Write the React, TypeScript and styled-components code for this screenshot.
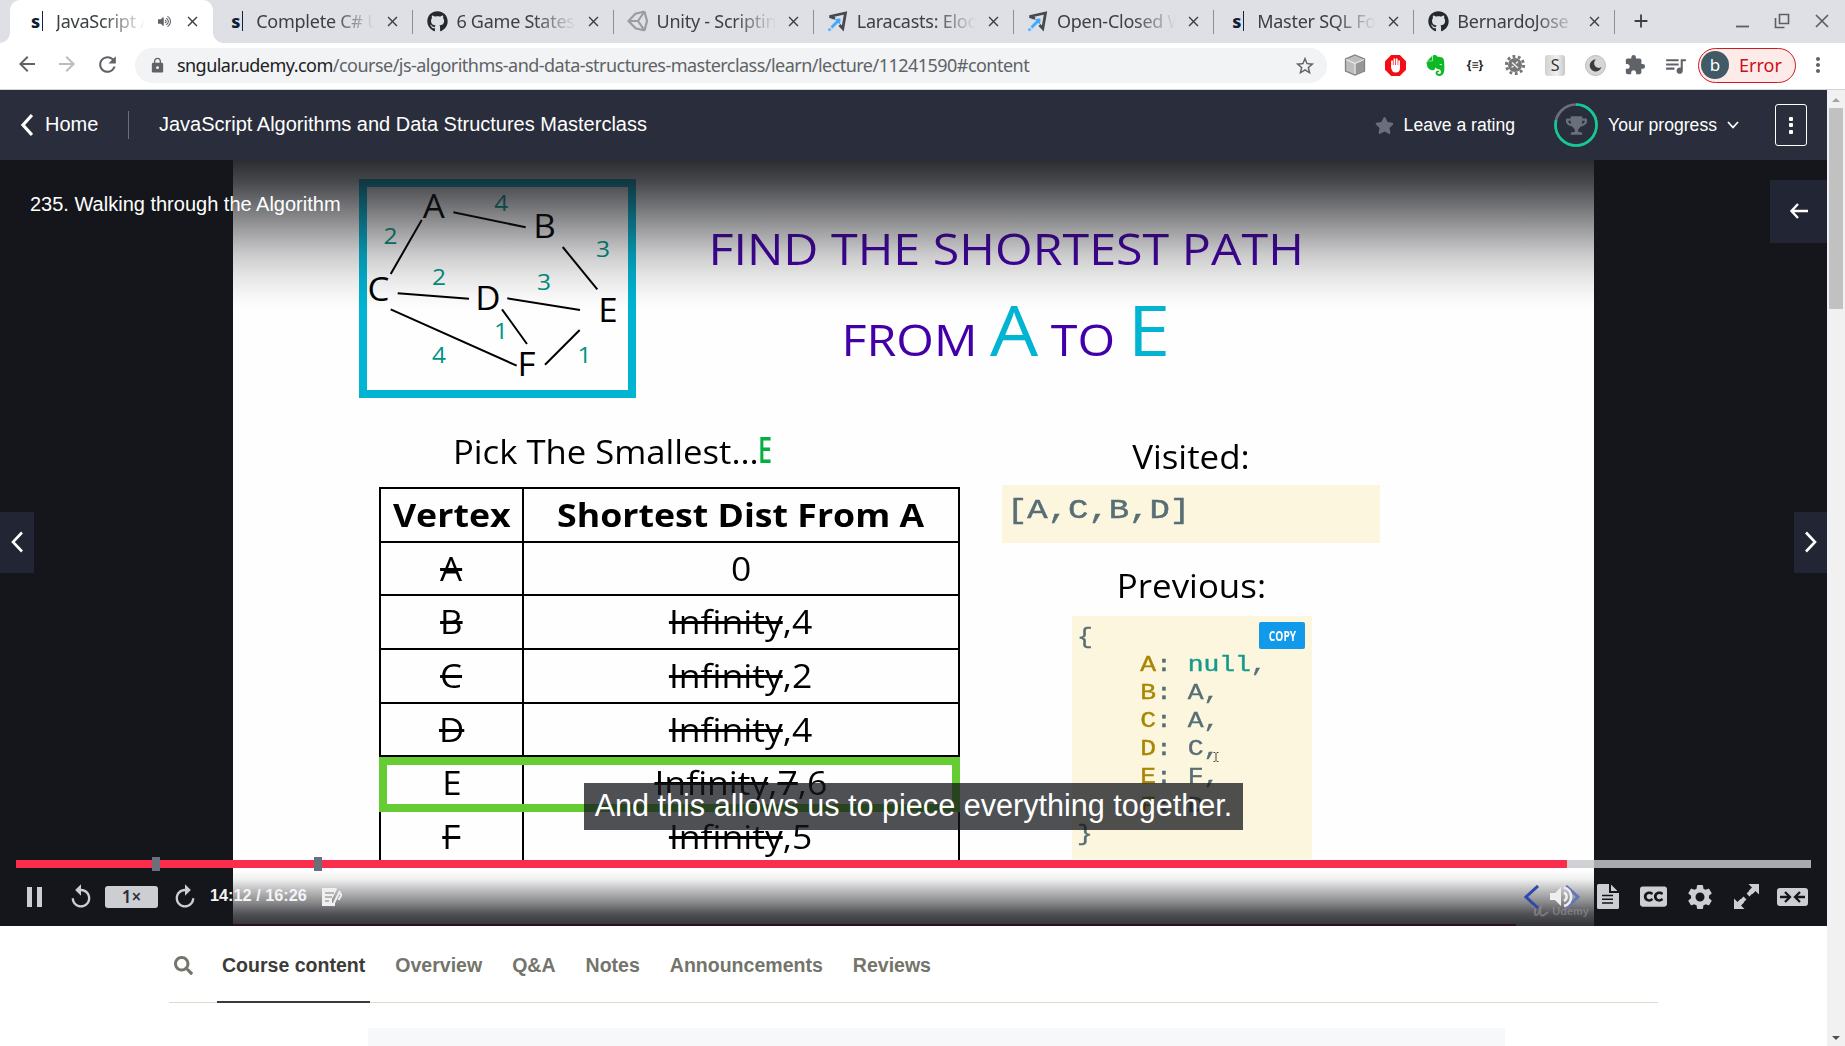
import React from "react";
import styled, { createGlobalStyle, css } from "styled-components";
import { FaGithub, FaVolumeUp, FaStar, FaTrophy, FaClosedCaptioning, FaSearch } from "react-icons/fa";
import {
  MdArrowBack, MdArrowForward, MdRefresh, MdLock, MdStarBorder, MdExtension, MdQueueMusic,
  MdMoreVert, MdReplay, MdSettings, MdAdd, MdClose,
} from "react-icons/md";
import { SiEvernote } from "react-icons/si";

const ui = `"Noto Sans", "Open Sans", sans-serif`;
const slideFont = `"Open Sans", "Noto Sans", sans-serif`;
const sans = `"Liberation Sans", Arial, sans-serif`;
const mono = `"Liberation Mono", "Courier New", monospace`;

const GlobalStyle = createGlobalStyle`
  * { box-sizing: border-box; }
  body { margin: 0; background: #fff; overflow: hidden; }
  svg { display: block; flex: none; }
`;

const Browser = styled.div`
  display: flex;
  flex-direction: column;
  width: 1845px;
  height: 1046px;
  overflow: hidden;
  font-family: ${sans};
`;

/* ---------- tab strip ---------- */
const TabStrip = styled.div`
  display: flex;
  height: 43px;
  flex: none;
  padding-left: 13px;
  background: #dee0e6;
  color: #3c4043;
`;

const TabBox = styled.div<{ $active?: boolean; $divider?: boolean }>`
  position: relative;
  display: flex;
  align-items: center;
  width: 200.2px;
  height: 43px;
  padding: 0 12px 1px 12px;
  font: 18px/42px ${ui};
  letter-spacing: -0.25px;
  ${(p) => p.$active && css`
    background: #fff;
    border-radius: 10px 10px 0 0;
    box-shadow: -3px 0 0 #fff;
    &::before, &::after {
      content: "";
      position: absolute;
      bottom: 0;
      width: 10px;
      height: 10px;
    }
    &::before { left: -13px; background: radial-gradient(circle at 0 0, transparent 9.5px, #fff 10px); }
    &::after { right: -10px; background: radial-gradient(circle at 100% 0, transparent 9.5px, #fff 10px); }
  `}
  ${(p) => p.$divider && css`
    background: linear-gradient(#8b8e94, #8b8e94) right 10px / 1px 24px no-repeat;
  `}
`;

const Favicon = styled.div`
  display: grid;
  place-items: center;
  width: 24px;
  height: 24px;
  flex: none;
`;

const SMark = styled.span`
  display: block;
  padding-right: 2px;
  border-right: 1.5px solid #14243c;
  color: #0e1d36;
  font: 800 18px/20px ${ui};
`;

const TabTitle = styled.div`
  flex: 1;
  min-width: 0;
  margin-left: 7px;
  overflow: hidden;
  white-space: nowrap;
  height: 42px;
  mask-image: linear-gradient(90deg, #000 calc(100% - 44px), transparent calc(100% - 2px));
`;

const TabSound = styled(FaVolumeUp)`
  width: 13px;
  height: 13px;
  margin: 0 6px 0 11px;
  color: #5f6368;
`;

const TabClose = styled(MdClose)`
  margin-left: 7px;
  width: 17px;
  height: 17px;
`;

const NewTab = styled(MdAdd)`
  align-self: center;
  width: 22px;
  height: 22px;
  margin: 0 0 1px 15px;
`;

const WindowButtons = styled.div`
  display: flex;
  align-items: center;
  gap: 24px;
  margin-left: auto;
  padding: 0 15px 1px 0;
`;

/* ---------- address row ---------- */
const Toolbar = styled.div`
  display: flex;
  align-items: center;
  height: 47px;
  flex: none;
  padding: 0 15px 6px 0;
  border-bottom: 1px solid #cfd6da;
  color: #5f6368;
`;

const NavButtons = styled.div`
  display: flex;
  width: 135px;
  gap: 16px;
  padding: 2px 0 0 15px;
`;

const AddressBar = styled.div`
  display: flex;
  align-items: center;
  width: 1193px;
  height: 35px;
  padding: 0 11px 0 14px;
  margin-top: 5px;
  border-radius: 18px;
  background: #f1f3f4;
  font: 18px/35px ${ui};
  letter-spacing: -0.53px;
`;

const Url = styled.span`
  flex: 1;
  margin-left: 11px;
  b { font-weight: 400; color: #202124; }
`;

const Extensions = styled.div`
  display: grid;
  grid-template-columns: repeat(9, 40px);
  place-items: center;
  width: 360px;
  margin: 4px 0 0 8px;
`;

const Braces = styled.span`
  color: #222;
  font: 700 12px/16px ${ui};
`;

const LetterKey = styled.span`
  width: 20px;
  height: 21px;
  border-radius: 3px;
  background: linear-gradient(90deg, #d0d0d0, #f0f0f0 60%, #c6c6c6);
  color: #333;
  font: 16px/21px ${ui};
  text-align: center;
`;

const ErrorPill = styled.div`
  display: flex;
  align-items: center;
  gap: 10px;
  width: 98px;
  height: 35px;
  margin: 4px 0 0 3px;
  padding-left: 2px;
  border: 1.5px solid #d2191f;
  border-radius: 18px;
  background: #fdebea;
  color: #d00d18;
  font: 18px/30px ${ui};
`;

const Avatar = styled.span`
  width: 28px;
  height: 28px;
  border-radius: 50%;
  background: #415a66;
  color: #fff;
  font: 17px/27px ${ui};
  text-align: center;
`;

const MenuDots = styled(MdMoreVert)`
  width: 24px;
  height: 24px;
  margin: 4px 0 0 10px;
`;

/* ---------- page ---------- */
const Viewport = styled.div`
  display: flex;
  flex: 1;
  min-height: 0;
`;

const Page = styled.main`
  width: 1827px;
`;

const CourseHeader = styled.header`
  display: flex;
  align-items: center;
  height: 70px;
  padding: 0 20px 0 20px;
  background: #2a2d3b;
  color: #fff;
  font-size: 20px;
`;

const HomeLink = styled.div`
  display: flex;
  align-items: center;
  gap: 12px;
  width: 109px;
  height: 28px;
  border-right: 1px solid #6a6f7c;
`;

const LinkText = styled.span`
  padding-bottom: 2px;
`;

const CourseTitle = styled.div`
  margin-left: 30px;
  padding-bottom: 2px;
`;

const HeaderActions = styled.div`
  display: flex;
  align-items: center;
  margin-left: auto;
  font-size: 17.6px;
`;

const Rating = styled.div`
  display: flex;
  align-items: center;
  gap: 10px;
  svg { color: #6a6f7c; }
`;

const ProgressRing = styled.div`
  display: grid;
  width: 44px;
  height: 44px;
  margin: 0 10px 0 39px;
  place-items: center;
  > * { grid-area: 1 / 1; }
`;

const OptionsButton = styled.div`
  display: grid;
  width: 32px;
  height: 42px;
  margin-left: 36px;
  place-content: center;
  gap: 2.5px;
  border: 1.4px solid #fff;
  border-radius: 3px;
  i { width: 4px; height: 4px; background: #fff; border-radius: 1px; }
`;

/* ---------- player ---------- */
const Player = styled.section`
  position: relative;
  height: 766px;
  background: #15161b;
`;

const Slide = styled.div`
  width: 1361px;
  height: 766px;
  margin: 0 auto;
  background: #fefefe;
  color: #000;
  font-family: ${slideFont};
  overflow: hidden;
`;

const Wide = styled.span<{ $by?: number; $from?: string }>`
  display: inline-block;
  transform: scaleX(${(p) => p.$by ?? 1.09});
  transform-origin: ${(p) => p.$from ?? "center"};
`;

const SlideTop = styled.div`
  display: flex;
  height: 238px;
  padding: 19px 0 0 126px;
`;

const GraphFrame = styled.div`
  width: 277px;
  height: 219px;
  border: 8px solid #00b4d2;
  svg { margin: -8px; }
  text { font-family: ${slideFont}; }
`;

const Headline = styled.div`
  width: 740px;
  padding-top: 24px;
  color: #4300a8;
  font-size: 44.4px;
  line-height: 91px;
  text-align: center;
  white-space: nowrap;
  p { margin: 0; height: 91px; }
  em { font-style: normal; font-size: 70px; line-height: 1px; color: #00b4d2; }
`;

const SlideBody = styled.div`
  display: flex;
  padding-left: 146px;
`;

const TableSide = styled.div`
  width: 581px;
  margin-right: 42px;
`;

const PickLine = styled.div`
  display: flex;
  height: 89px;
  padding: 32px 0 0 74px;
  font-size: 32px;
  line-height: 44px;
  white-space: nowrap;
`;

const Picked = styled.span`
  margin-left: 23px;
  color: #00b140;
  font-size: 36px;
  line-height: 40px;
  font-weight: 600;
  transform: scaleX(0.7);
  transform-origin: 0 0;
`;

const DistTable = styled.div`
  position: relative;
  border: 2px solid #000;
`;

const DistRow = styled.div<{ $head?: boolean }>`
  display: grid;
  grid-template-columns: 141px 1fr;
  height: ${(p) => (p.$head ? 51.7 : 53.67)}px;
  font-size: 32px;
  font-weight: ${(p) => (p.$head ? 700 : 400)};
  line-height: 51px;
  text-align: center;
  white-space: nowrap;
  & + & { border-top: 2px solid #000; }
  & > div + div { border-left: 2px solid #000; }
  s { text-decoration-thickness: 3px; }
`;

const RowHighlight = styled.div`
  position: absolute;
  left: -2px;
  right: -2px;
  top: 268px;
  height: 55px;
  border: 8px solid #66cc33;
`;

const NotesSide = styled.div`
  width: 378px;
  display: flex;
  flex-direction: column;
  align-items: center;
  font-size: 32px;
`;

const NotesHeading = styled.div<{ $h: number; $pad: number }>`
  height: ${(p) => p.$h}px;
  padding-top: ${(p) => p.$pad}px;
  line-height: 44px;
`;

const VisitedBox = styled.div`
  align-self: stretch;
  height: 58px;
  padding-left: 5px;
  background: #fcf6de;
  color: #586e75;
  font: 28px/52px ${mono};
  -webkit-text-stroke: 0.5px;
`;

const PreviousBox = styled.div`
  position: relative;
  width: 240px;
  height: 243px;
  margin-left: 2px;
  padding: 8px 0 0 5px;
  background: #fcf6de;
  color: #586e75;
  font: 22px/28.1px ${mono};
  white-space: pre;
  -webkit-text-stroke: 0.4px;
  b { font-weight: 400; color: #a98600; }
  i { font-style: normal; color: #16998d; }
`;

const CopyTag = styled.span`
  position: absolute;
  right: 7px;
  top: 6px;
  width: 46px;
  height: 27px;
  border-radius: 2px;
  background: #129aea;
  color: #fff;
  font: 700 14.5px/27px ${slideFont};
  -webkit-text-stroke: 0;
  display: flex;
  justify-content: center;
`;

const TextCursor = styled.svg`
  position: absolute;
  left: 141px;
  top: 136px;
`;

const Shade = styled.div<{ $bottom?: boolean }>`
  position: absolute;
  left: 0;
  right: 0;
  ${(p) => p.$bottom
    ? css`
      bottom: 0;
      height: 56px;
      background: linear-gradient(rgba(21,22,27,0), rgba(21,22,27,.06) 16%, rgba(21,22,27,.28) 36%, rgba(21,22,27,.5) 58%, rgba(21,22,27,.74) 78%, rgba(21,22,27,.88));`
    : css`
      top: 0;
      height: 150px;
      background: linear-gradient(rgba(21,22,27,.9), rgba(21,22,27,.78) 15%, rgba(21,22,27,.62) 29%, rgba(21,22,27,.42) 46%, rgba(21,22,27,.22) 63%, rgba(21,22,27,.1) 78%, rgba(21,22,27,.03) 91%, rgba(21,22,27,0));`}
`;

const BufferEdge = styled.div`
  position: absolute;
  left: 0;
  bottom: 0;
  width: 1516px;
  height: 2px;
  background: linear-gradient(90deg, #15161b 233px, #2d101c 233px);
`;

const LectureName = styled.div`
  position: absolute;
  left: 30px;
  top: 32px;
  color: #fff;
  font-size: 20px;
  line-height: 24px;
`;

const EdgeButton = styled.div<{ $side: "left" | "right"; $top: number; $w: number; $h: number }>`
  position: absolute;
  ${(p) => p.$side}: 0;
  top: ${(p) => p.$top}px;
  display: grid;
  place-items: center;
  width: ${(p) => p.$w}px;
  height: ${(p) => p.$h}px;
  padding-bottom: 2px;
  background: #222533;
`;

const Caption = styled.div`
  position: absolute;
  left: 584px;
  top: 623px;
  width: 659px;
  height: 47px;
  background: rgba(20, 21, 27, 0.75);
  color: #fff;
  font-size: 30.6px;
  line-height: 44px;
  text-align: center;
  white-space: nowrap;
`;

const Controls = styled.div`
  position: absolute;
  left: 16px;
  right: 16px;
  bottom: 0;
  height: 69px;
  color: #cdced2;
`;

const SeekBar = styled.div`
  position: relative;
  height: 8px;
  margin-top: 3px;
  background: linear-gradient(90deg, #fa2d4c 1551px, rgba(199, 200, 204, 0.83) 1551px);
`;

const Bookmark = styled.i<{ $at: number }>`
  position: absolute;
  left: ${(p) => p.$at}px;
  top: -3px;
  width: 8px;
  height: 14px;
  background: #6a6f7c;
`;

const ControlRow = styled.div`
  display: flex;
  align-items: center;
  height: 57px;
  padding: 0 3px 0 11px;
`;

const PauseIcon = styled.div`
  width: 15px;
  height: 20px;
  border: solid #cdced2;
  border-width: 0 5.5px;
`;

const Replay = styled(MdReplay)<{ $flip?: boolean }>`
  width: 28px;
  height: 28px;
  margin: 0 10px 0 25px;
  ${(p) => p.$flip && css`transform: scaleX(-1); margin: 0 10px 0 13px;`}
`;

const Speed = styled.div`
  width: 53px;
  height: 22px;
  margin-top: 1px;
  border-radius: 3px;
  background: #cdced2;
  color: #2a2d3b;
  font: 600 17px/22px ${ui};
  text-align: center;
`;

const Clock = styled.div`
  width: 112px;
  padding-bottom: 2px;
  color: #f4f4f5;
  font-size: 16.3px;
  font-weight: 700;
  white-space: nowrap;
`;

const RightControls = styled.div`
  display: flex;
  align-items: center;
  margin-left: auto;
`;

const Gap = styled.div<{ $w: number }>`
  width: ${(p) => p.$w}px;
`;

const Watermark = styled.div`
  position: absolute;
  right: 233px;
  bottom: 6px;
  display: flex;
  align-items: center;
  gap: 3px;
  padding-right: 5px;
  color: rgba(160, 152, 158, 0.55);
  font: 700 11px/18px ${sans};
`;

/* ---------- course tabs ---------- */
const CourseTabs = styled.nav`
  display: flex;
  width: 1489px;
  height: 77px;
  margin-left: 169px;
  border-bottom: 1px solid #dcdccb;
  color: #73746a;
  font-size: 19.55px;
  font-weight: 700;
  line-height: 79px;
`;

const SearchIcon = styled(FaSearch)`
  width: 19px;
  height: 19px;
  align-self: center;
  margin: 3px 0 0 5px;
`;

const CourseTab = styled.div<{ $active?: boolean; $first?: boolean }>`
  height: 77px;
  margin-left: ${(p) => (p.$first ? 24 : 20)}px;
  padding: 0 5px;
  ${(p) => p.$active && css`
    color: #3c3b37;
    border-bottom: 2px solid #3c3b37;
  `}
`;

const ContentPanel = styled.div`
  width: 1137px;
  height: 18px;
  margin: 25px 0 0 368px;
  background: #f6f8fa;
`;

/* ---------- scrollbar ---------- */
const Scrollbar = styled.div`
  display: flex;
  flex-direction: column;
  align-items: center;
  width: 18px;
  background: #f1f1f1;
`;

const ScrollThumb = styled.div`
  width: 14px;
  height: 201px;
  margin-top: 6px;
  background: #c1c1c1;
`;

const ScrollArrow = styled.i<{ $up?: boolean }>`
  margin-top: ${(p) => (p.$up ? "8px" : "auto")};
  margin-bottom: ${(p) => (p.$up ? "0" : "6px")};
  border: 4px solid transparent;
  ${(p) => (p.$up ? "border-top: 0; border-bottom-color: #a3a3a3;" : "border-bottom: 0; border-top-color: #505050;")}
`;

const UnityIcon = () => (
  <svg width="21" height="22" viewBox="0 0 21 22" fill="none" stroke="#9b9c9f" strokeWidth="2.2">
    <path d="M17.500 1.500 8.500 3.800 1.500 11l7 7.200 9 2.300M17.500 1.500 20 11l-2.500 9.500M1.500 11H11M11 11l6.500-9.500M11 11l6.500 9.500" />
  </svg>
);

const LaracastsIcon = () => (
  <svg width="21" height="21" viewBox="0 0 21 21" fill="none">
    <path d="M2.500 5.500 18.500 2 15.800 17.500 12.500 14" stroke="#46494e" strokeWidth="2.800" />
    <path d="M2.500 5.500 8 7.500" stroke="#46494e" strokeWidth="2.800" />
    <path d="M12.500 8.500 4.500 16.500" stroke="#3fa9ff" strokeWidth="2.800" />
    <path d="M7.500 8l6-.5-.5 6z" fill="#3fa9ff" />
    <circle cx="2.6" cy="18.600" r="1.700" fill="#62b8ff" />
  </svg>
);

const Singular = () => <SMark>s</SMark>;

const tabs: { icon: React.ReactNode; title: string; active?: boolean }[] = [
  { icon: <Singular />, title: "JavaScript Algorithms", active: true },
  { icon: <Singular />, title: "Complete C# Unity Developer" },
  { icon: <FaGithub size={21} color="#24292e" />, title: "6 Game States" },
  { icon: <UnityIcon />, title: "Unity - Scripting API" },
  { icon: <LaracastsIcon />, title: "Laracasts: Eloquent" },
  { icon: <LaracastsIcon />, title: "Open-Closed Wins" },
  { icon: <Singular />, title: "Master SQL For Data" },
  { icon: <FaGithub size={21} color="#24292e" />, title: "BernardoJose" },
];

const vertices: [string, number, number][] = [
  ["A", 433.7, 217.7], ["B", 544.4, 238], ["C", 378.6, 301.3], ["D", 487.8, 310], ["E", 608, 321.7], ["F", 526.6, 376],
];

const weights: [string, number, number][] = [
  ["4", 501.3, 210.7], ["2", 390.5, 244], ["3", 603, 257], ["2", 439, 285],
  ["3", 544, 290], ["1", 501, 338.6], ["4", 439, 362.6], ["1", 584.6, 363.3],
];

const edges = [
  "M421.7 220 390.7 274", "M453.3 212.3 525.7 227.3", "M562.7 247 597.3 289.3", "M397.7 293.3 469 298.7",
  "M507.3 298.3 580 310", "M502 309.3 527 344", "M390.7 309.3 516.7 365.7", "M545 364.7 579.7 330",
].join("");

const Graph = () => (
  <GraphFrame>
    <svg width="277" height="219" viewBox="359 179 277 219" textAnchor="middle">
      <path d={edges} stroke="#000" strokeWidth="2" />
      {vertices.map(([t, x, y]) => (
        <text key={t} transform={`translate(${x} ${y}) scale(1.09 1)`} fontSize="32">{t}</text>
      ))}
      {weights.map(([t, x, y]) => (
        <text key={`${x}-${y}`} transform={`translate(${x} ${y}) scale(1.09 1)`} fontSize="22.5" fill="#009384">{t}</text>
      ))}
    </svg>
  </GraphFrame>
);

const distances: { v: string; done?: boolean; old?: string[]; now: string }[] = [
  { v: "A", done: true, now: "0" },
  { v: "B", done: true, old: ["Infinity"], now: "4" },
  { v: "C", done: true, old: ["Infinity"], now: "2" },
  { v: "D", done: true, old: ["Infinity"], now: "4" },
  { v: "E", old: ["Infinity", "7"], now: "6" },
  { v: "F", done: true, old: ["Infinity"], now: "5" },
];

const previous = [["A", "null"], ["B", "A"], ["C", "A"], ["D", "C"], ["E", "F"], ["F", "D"]];

const Chevron = ({ w, h, d, color = "#fff", s = 3 }: { w: number; h: number; d: string; color?: string; s?: number }) => (
  <svg width={w} height={h} viewBox={`0 0 ${w} ${h}`} fill="none" stroke={color} strokeWidth={s}><path d={d} /></svg>
);

export default function App() {
  return (
    <Browser>
      <GlobalStyle />
      <TabStrip>
        {tabs.map((t, i) => (
          <TabBox key={i} $active={t.active} $divider={i > 0}>
            <Favicon>{t.icon}</Favicon>
            <TabTitle>{t.title}</TabTitle>
            {t.active && <TabSound />}
            <TabClose />
          </TabBox>
        ))}
        <NewTab />
        <WindowButtons>
          <Chevron w={15} h={16} d="M1 13.5h13" color="#5c5e63" s={1.8} />
          <Chevron w={16} h={16} d="M5.5 1.5h9v9h-9zM1.5 5v9.5h9" color="#5c5e63" s={1.6} />
          <Chevron w={16} h={16} d="M2 2 14 14M14 2 2 14" color="#5c5e63" s={1.7} />
        </WindowButtons>
      </TabStrip>

      <Toolbar>
        <NavButtons>
          <MdArrowBack size={24} />
          <MdArrowForward size={24} color="#babcbe" />
          <MdRefresh size={25} />
        </NavButtons>
        <AddressBar>
          <MdLock size={17} />
          <Url><b>sngular.udemy.com</b>/course/js-algorithms-and-data-structures-masterclass/learn/lecture/11241590#content</Url>
          <MdStarBorder size={22} />
        </AddressBar>
        <Extensions>
          <svg width="22" height="22" viewBox="0 0 22 22" stroke="#808080" strokeWidth="1.3">
            <path d="M11 1 20.500 5v12L11 21 1.500 17V5z" fill="#bdbdbd" />
            <path d="M11 9.500 20 5.300v11.500L11 20.500z" fill="#969696" stroke="none" />
            <path d="M11 20V9.500L2 5.500M11 9.500l9-4" fill="none" stroke="#e8e8e8" />
          </svg>
          <svg width="21" height="21" viewBox="0 0 21 21">
            <path d="M6.200 0h8.600L21 6.200v8.600L14.800 21H6.200L0 14.800V6.200z" fill="#f40d12" />
            <path d="M7 12V6M9.400 11V4M11.800 11V4.200M14.100 11.500V6" stroke="#fff" strokeWidth="1.700" strokeLinecap="round" />
            <path d="M6.100 10h8.900v3c0 3-1.500 4.500-4.300 4.500S7 16 6.100 13z" fill="#fff" />
          </svg>
          <SiEvernote size={21} color="#0fb825" />
          <Braces>{"{≡}"}</Braces>
          <svg width="22" height="22" viewBox="0 0 22 22" fill="none">
            <circle cx="11" cy="11" r="8.600" stroke="#777" strokeWidth="3" strokeDasharray="2.800 2.600" />
            <circle cx="11" cy="11" r="7" fill="#777" />
            <path d="M8 8.500 14 14M14 7.500 12 9.500M7.500 13.500l2-1.500" stroke="#eee" strokeWidth="1.500" />
          </svg>
          <LetterKey>S</LetterKey>
          <svg width="21" height="21" viewBox="0 0 21 21">
            <circle cx="10.500" cy="10.500" r="10" fill="#d6d6d6" stroke="#bbb" />
            <path d="M11 4.500a6 6 0 1 0 5.500 7.500A4.600 4.600 0 0 1 11 4.500z" fill="#3d3d3d" />
          </svg>
          <MdExtension size={22} />
          <MdQueueMusic size={25} />
        </Extensions>
        <ErrorPill><Avatar>b</Avatar>Error</ErrorPill>
        <MenuDots />
      </Toolbar>

      <Viewport>
        <Page>
          <CourseHeader>
            <HomeLink>
              <Chevron w={13} h={24} d="M12 2 3 12l9 10" s={3.2} />
              <LinkText>Home</LinkText>
            </HomeLink>
            <CourseTitle>JavaScript Algorithms and Data Structures Masterclass</CourseTitle>
            <HeaderActions>
              <Rating><FaStar size={19} />Leave a rating</Rating>
              <ProgressRing>
                <svg width="44" height="44" viewBox="0 0 44 44" fill="none" strokeWidth="2.600">
                  <circle cx="22" cy="22" r="20.500" stroke="#6a6f7c" />
                  <circle cx="22" cy="22" r="20.500" stroke="#0fcb93" pathLength="100" strokeDasharray="79 21" transform="rotate(-90 22 22)" />
                </svg>
                <FaTrophy size={21} color="#6a6f7c" />
              </ProgressRing>
              Your progress
              <Gap $w={10} />
              <Chevron w={12} h={8} d="M1 1l5 5.500L11 1" s={1.8} />
              <OptionsButton><i /><i /><i /></OptionsButton>
            </HeaderActions>
          </CourseHeader>

          <Player>
            <Slide>
              <SlideTop>
                <Graph />
                <Headline>
                  <p><Wide>FIND THE SHORTEST PATH</Wide></p>
                  <p><Wide>FROM <em>A</em> TO <em>E</em></Wide></p>
                </Headline>
              </SlideTop>
              <SlideBody>
                <TableSide>
                  <PickLine><Wide $by={1.083} $from="left">Pick The Smallest...</Wide><Picked>E</Picked></PickLine>
                  <DistTable>
                    <DistRow $head>
                      <div><Wide $by={1.115}>Vertex</Wide></div>
                      <div><Wide $by={1.115}>Shortest Dist From A</Wide></div>
                    </DistRow>
                    {distances.map((r) => (
                      <DistRow key={r.v}>
                        <div><Wide>{r.done ? <s>{r.v}</s> : r.v}</Wide></div>
                        <div>
                          <Wide $by={1.11}>{r.old?.map((o) => <React.Fragment key={o}><s>{o}</s>,</React.Fragment>)}{r.now}</Wide>
                        </div>
                      </DistRow>
                    ))}
                    <RowHighlight />
                  </DistTable>
                </TableSide>
                <NotesSide>
                  <NotesHeading $h={87} $pad={37}><Wide>Visited:</Wide></NotesHeading>
                  <VisitedBox><Wide $by={1.211} $from="left">[A,C,B,D]</Wide></VisitedBox>
                  <NotesHeading $h={73} $pad={21}><Wide>Previous:</Wide></NotesHeading>
                  <PreviousBox>
                    <Wide $by={1.197} $from="left">
                      <div>{"{"}</div>
                      {previous.map(([k, v], i) => (
                        <div key={k}>{"    "}<b>{k}</b>: {v === "null" ? <i>{v}</i> : v}{i < 5 && ","}</div>
                      ))}
                      <div>{"}"}</div>
                    </Wide>
                    <CopyTag><Wide $by={0.7}>COPY</Wide></CopyTag>
                    <TextCursor width="6" height="10" viewBox="0 0 6 10" fill="none" stroke="#444"><path d="M.5.5h1.500l1 1 1-1h1.500M3 1.500v7M.5 9.500h1.500l1-1 1 1h1.500" /></TextCursor>
                  </PreviousBox>
                </NotesSide>
              </SlideBody>
            </Slide>
            <Shade />
            <Shade $bottom />
            <Watermark>
              <svg width="18" height="14" viewBox="0 0 18 14" fill="none" stroke="currentColor" strokeWidth="2"><path d="M1 3c3-4 4 0 3 4s2 7 5-1l1-4c-2 6-1 11 3 9l4-3" /></svg>
              Udemy
            </Watermark>
            <BufferEdge />
            <LectureName>235. Walking through the Algorithm</LectureName>
            <EdgeButton $side="right" $top={20} $w={57} $h={63}>
              <Chevron w={20} h={18} d="M9 2 2.500 9l6.500 7M3 9h16" s={2.4} />
            </EdgeButton>
            <EdgeButton $side="left" $top={352} $w={34} $h={61}>
              <Chevron w={14} h={22} d="M12 1.500 3 11l9 9.500" s={2.6} />
            </EdgeButton>
            <EdgeButton $side="right" $top={352} $w={33} $h={61}>
              <Chevron w={14} h={22} d="M2 1.500 11 11l-9 9.500" s={2.6} />
            </EdgeButton>
            <Caption>And this allows us to piece everything together.</Caption>
            <Controls>
              <SeekBar>
                <Bookmark $at={136} />
                <Bookmark $at={298} />
              </SeekBar>
              <ControlRow>
                <PauseIcon />
                <Replay />
                <Speed>1×</Speed>
                <Replay $flip />
                <Gap $w={1} />
                <Clock>14:12 / 16:26</Clock>
                <svg width="20" height="20" viewBox="0 0 20 20" fill="none">
                  <path d="M0 1h14l1 1-5 10v4l3-1v4H0z" fill="#f0f0f1" />
                  <path d="M3 6h9M3 10h7M3 14h4" stroke="#a3a3a6" strokeWidth="1.500" />
                  <path d="M18 4 12 16l-1 3M18 6l1.500 2-3 5" stroke="#f0f0f1" strokeWidth="2" />
                </svg>
                <RightControls>
                  <Chevron w={15} h={24} d="M14 1 2 12l12 11" color="#3047ab" s={3} />
                  <Gap $w={11} />
                  <svg width="30" height="24" viewBox="0 0 30 24" fill="none">
                    <path d="M16 1 28 12 16 23" stroke="#6377b8" strokeWidth="3" />
                    <path d="M0 8h5l6-6v19l-6-6H0z" fill="#eeeef0" />
                    <path d="M14 7.500c3.500 2 3.500 6.500 0 8.500M14 2.500c9.500 2.500 9.500 16 0 18.500" stroke="#eeeef0" strokeWidth="2.600" />
                  </svg>
                  <Gap $w={17} />
                  <svg width="22" height="25" viewBox="0 0 22 25">
                    <path d="M1.500 0H12v9h10v14.500a1.500 1.500 0 0 1-1.500 1.500h-19A1.500 1.500 0 0 1 0 23.500v-22A1.500 1.500 0 0 1 1.500 0zM14 .5 20.500 7H14z" fill="#cdced2" />
                    <path d="M5 11.500h11M5 15.200h11M5 19h11" stroke="#15161b" strokeWidth="1.600" />
                  </svg>
                  <Gap $w={21.5} />
                  <FaClosedCaptioning size={27} />
                  <Gap $w={18} />
                  <MdSettings size={30} />
                  <Gap $w={19} />
                  <svg width="25" height="25" viewBox="0 0 25 25" fill="#cdced2">
                    <path d="M14.500 0H25v10.500l-3.500-3.500-3 3-3.500-3.500 3-3zM10.500 25H0V14.500L3.500 18l3-3 3.500 3.500-3 3z" />
                    <path d="M20 5 14 11M5 20 11 14" stroke="#cdced2" strokeWidth="4" />
                  </svg>
                  <Gap $w={18} />
                  <svg width="31" height="18" viewBox="0 0 31 18" fill="none">
                    <rect width="31" height="18" rx="3" fill="#cdced2" />
                    <path d="M3 9h9M8 4l5 5-5 5M28 9h-9M23 4l-5 5 5 5" stroke="#15161b" strokeWidth="2.300" />
                  </svg>
                </RightControls>
              </ControlRow>
            </Controls>
          </Player>

          <CourseTabs>
            <SearchIcon />
            <CourseTab $active $first>Course content</CourseTab>
            {["Overview", "Q&A", "Notes", "Announcements", "Reviews"].map((t) => <CourseTab key={t}>{t}</CourseTab>)}
          </CourseTabs>
          <ContentPanel />
        </Page>
        <Scrollbar>
          <ScrollArrow $up />
          <ScrollThumb />
          <ScrollArrow />
        </Scrollbar>
      </Viewport>
    </Browser>
  );
}
